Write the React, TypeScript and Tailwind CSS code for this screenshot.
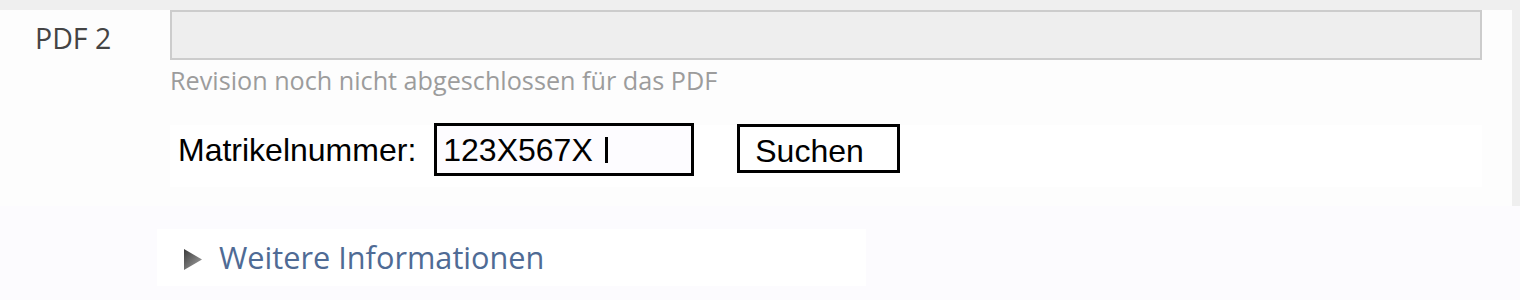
const Caret = () => <span className="inline-block w-[3px] h-[26px] bg-black ml-[12px]" />;

const App = () => {
  return (
    <div className="w-[1520px] h-[300px] overflow-hidden bg-[#fcfbfe] font-['Open_Sans',sans-serif]">
      <div className="h-[10px] bg-[#efefef]" />
      <div className="flex">
        <div className="flex w-[1512px] bg-[#fdfdfd] pb-[19px]">
          <div className="w-[170px] pl-[35px] pt-[10px] text-[28.5px] leading-[36px] text-[#444]">
            PDF 2
          </div>
          <div className="flex flex-col w-[1312px]">
            <div className="h-[50px] bg-[#eeeeee] border-2 border-[#cccccc]" />
            <p className="mt-[4px] text-[25.2px] leading-[32px] text-[#9c9c9c]">
              Revision noch nicht abgeschlossen für das PDF
            </p>
            <div className="flex items-start h-[62px] mt-[29px] bg-white">
              <div className="flex items-center h-[53px] -mt-[2px] pl-[8px] font-['Liberation_Sans',Arial,sans-serif] text-[32px] leading-none text-black">
                <span>Matrikelnummer:</span>
                <div className="flex items-center w-[260px] h-[53px] ml-[18px] pl-[6px] border-[3px] border-black bg-[#fdfcff]">
                  <span>123X567X</span>
                  <Caret />
                </div>
                <button className="self-start mt-[1px] w-[163px] h-[49px] ml-[43px] pl-[15px] pt-[4px] text-left border-[3px] border-black bg-white">
                  Suchen
                </button>
              </div>
            </div>
          </div>
        </div>
        <div className="w-[8px] bg-[#efefef]" />
      </div>
      <div className="flex items-center w-[709px] h-[57px] ml-[157px] mt-[23px] pl-[27px] bg-white">
        <svg width="18" height="21" viewBox="0 0 18 21" className="mt-[4px]">
          <defs>
            <linearGradient id="tri" x1="0" y1="0" x2="1" y2="1">
              <stop offset="0" stopColor="#3a3a3a" />
              <stop offset="1" stopColor="#a8a8a8" />
            </linearGradient>
          </defs>
          <polygon points="0,0 18,10.5 0,21" fill="url(#tri)" />
        </svg>
        <span className="ml-[17px] -mt-[2px] text-[30.7px] leading-[40px] text-[#4f6b95]">Weitere Informationen</span>
      </div>
    </div>
  );
};

export default App;
